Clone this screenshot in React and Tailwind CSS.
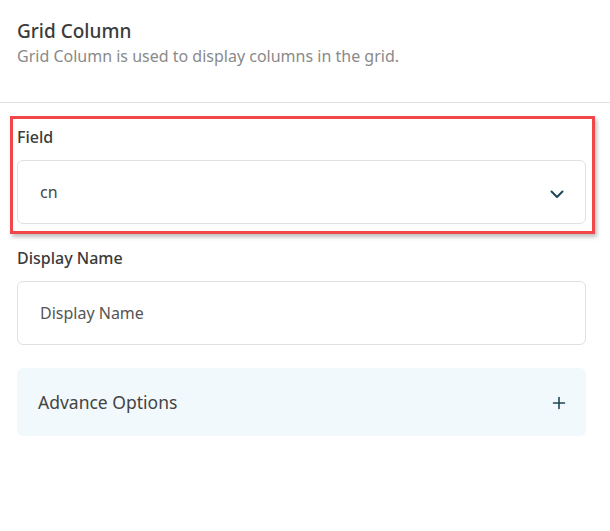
export default function App() {
    return (
        <div className="min-h-[531px] w-[610px] bg-white font-['Noto_Sans',sans-serif]">
            {/* header */}
            <div className="px-[17px] pt-[18px] pb-[35px]">
                <h1 className="text-[19px] font-medium leading-[26px] text-[#3b3b3b]">Grid Column</h1>
                <p className="mt-[1px] text-[16px] leading-[22px] text-[#8a8a8a]">
                    Grid Column is used to display columns in the grid.
                </p>
            </div>
            <div className="h-px w-full bg-[#e2e2e6]" />

            <div className="pl-[17px] pr-[24px] pt-[23px]">
                {/* Field (highlighted) */}
                <div className="relative">
                    <div className="pointer-events-none absolute -left-[7px] -right-[9px] -top-[10px] -bottom-[10px] border-[3px] border-[#f2474a] shadow-[2px_3px_4px_rgba(0,0,0,0.25)]" />
                    <label className="block text-[16px] font-medium leading-[22px] text-[#3b3b3b]">Field</label>
                    <div className="mt-[12px] flex h-[64px] items-center justify-between rounded-[6px] border border-[#e0e0e0] pl-[22px] pr-[20px]">
                        <span className="text-[16px] text-[#474747]">cn</span>
                        <svg width="16" height="16" viewBox="0 0 16 16" fill="none" className="mt-[4px]">
                            <path d="M2.5 5.5 L8 11 L13.5 5.5" stroke="#1f4656" strokeWidth="2" strokeLinecap="round" strokeLinejoin="round" />
                        </svg>
                    </div>
                </div>

                {/* Display Name */}
                <label className="mt-[23px] block text-[16px] font-medium leading-[22px] text-[#3b3b3b]">Display Name</label>
                <div className="mt-[12px] flex h-[64px] items-center rounded-[6px] border border-[#e0e0e0] pl-[22px]">
                    <span className="text-[16px] text-[#555555]">Display Name</span>
                </div>

                {/* Advance Options */}
                <div className="mt-[23px] flex h-[68px] items-center justify-between rounded-[6px] bg-[#f1f9fc] pl-[21px] pr-[20px]">
                    <span className="text-[17.5px] text-[#444444]">Advance Options</span>
                    <svg width="14" height="14" viewBox="0 0 14 14" fill="none" className="mt-[2px]">
                        <path d="M7 1.5 V12.5 M1.5 7 H12.5" stroke="#1f4656" strokeWidth="1.6" strokeLinecap="round" />
                    </svg>
                </div>
            </div>
        </div>
    );
}
